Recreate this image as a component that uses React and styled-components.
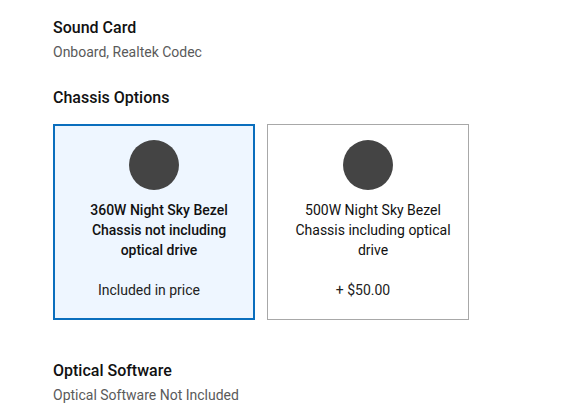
import React from 'react'
import styled, { createGlobalStyle } from 'styled-components'

const Global = createGlobalStyle`
  body {
    margin: 0;
    background: #fff;
    font-family: Roboto, "Liberation Sans", sans-serif;
    color: #111;
  }
`

const Page = styled.div`
  padding: 16px 0 0 53px;
`

const Section = styled.section`
  margin-bottom: ${(p) => p.gap || 0}px;
`

const Heading = styled.h3`
  margin: 0;
  font-size: 16px;
  font-weight: 500;
  line-height: 24px;
  color: #111;
`

const Sub = styled.div`
  margin-top: 2px;
  font-size: 14px;
  line-height: 20px;
  color: #5a5a5a;
`

const Cards = styled.div`
  display: flex;
  gap: 12px;
  margin-top: 14px;
`

const Card = styled.div`
  box-sizing: border-box;
  width: 202px;
  height: 196px;
  display: flex;
  flex-direction: column;
  align-items: center;
  padding: ${(p) => (p.selected ? 14 : 15)}px 12px 0;
  background: ${(p) => (p.selected ? '#eef6ff' : '#fff')};
  border: ${(p) => (p.selected ? '2px solid #0a6ebd' : '1px solid #a8a8a8')};
`

const Swatch = styled.div`
  width: 50px;
  height: 50px;
  border-radius: 50%;
  background: #444;
`

const Title = styled.div`
  margin-top: 10px;
  padding-left: 10px;
  font-size: 14px;
  line-height: 20px;
  text-align: center;
  font-weight: ${(p) => (p.selected ? 500 : 400)};
  color: #111;
`

const Price = styled.div`
  margin-top: 20px;
  padding-right: 10px;
  font-size: 14px;
  line-height: 20px;
  color: #222;
`

const options = [
  { title: '360W Night Sky Bezel Chassis not including optical drive', price: 'Included in price', selected: true },
  { title: '500W Night Sky Bezel Chassis including optical drive', price: '+ $50.00' },
]

export default function App() {
  return (
    <>
      <Global />
      <Page>
        <Section gap={24}>
          <Heading>Sound Card</Heading>
          <Sub>Onboard, Realtek Codec</Sub>
        </Section>
        <Section gap={39}>
          <Heading>Chassis Options</Heading>
          <Cards>
            {options.map((o) => (
              <Card key={o.title} selected={o.selected}>
                <Swatch />
                <Title selected={o.selected}>{o.title}</Title>
                <Price>{o.price}</Price>
              </Card>
            ))}
          </Cards>
        </Section>
        <Section>
          <Heading>Optical Software</Heading>
          <Sub>Optical Software Not Included</Sub>
        </Section>
      </Page>
    </>
  )
}
